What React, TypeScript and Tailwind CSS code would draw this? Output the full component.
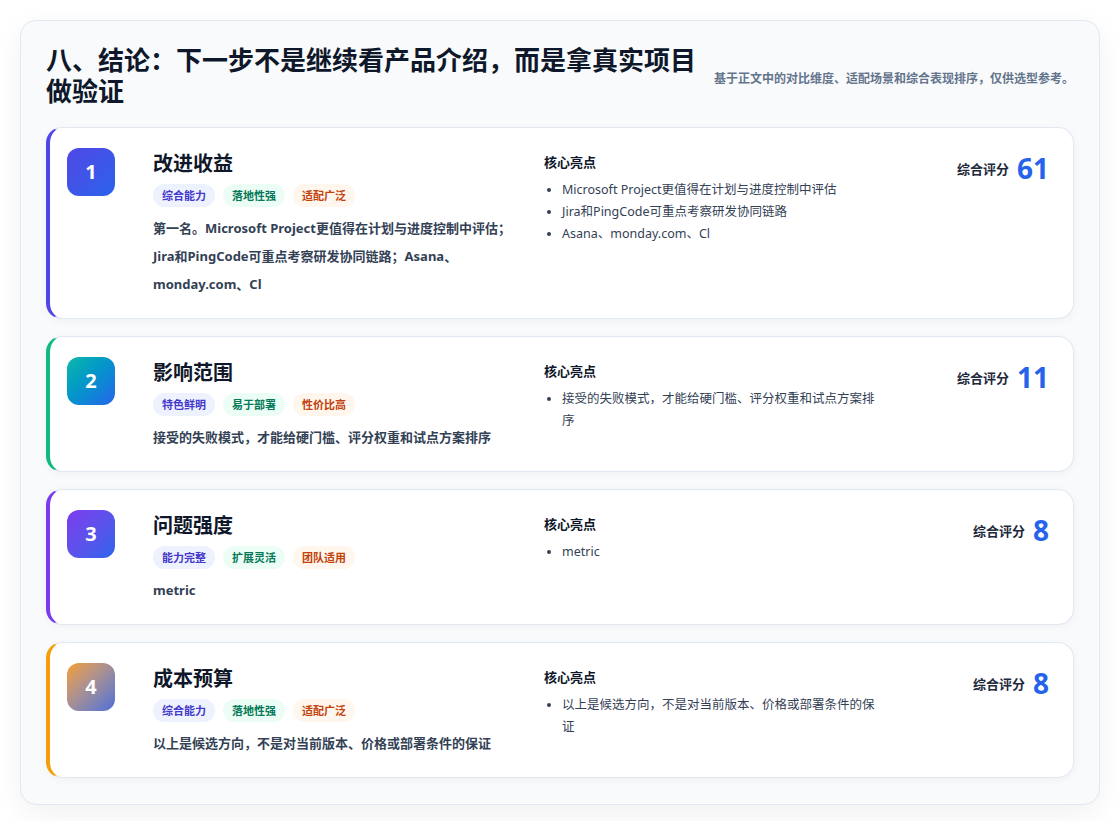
import React from "react";

type Item = {
  n: number;
  title: string;
  tags: string[];
  desc: string;
  points: string[];
  score: number;
  border: string;
  badge: string;
};

const items: Item[] = [
  {
    n: 1,
    title: "改进收益",
    tags: ["综合能力", "落地性强", "适配广泛"],
    desc: "第一名。Microsoft Project更值得在计划与进度控制中评估；Jira和PingCode可重点考察研发协同链路；Asana、monday.com、Cl",
    points: ["Microsoft Project更值得在计划与进度控制中评估", "Jira和PingCode可重点考察研发协同链路", "Asana、monday.com、Cl"],
    score: 61,
    border: "border-l-[#4f46e5]",
    badge: "bg-gradient-to-br from-[#4f46e5] to-[#2563eb]",
  },
  {
    n: 2,
    title: "影响范围",
    tags: ["特色鲜明", "易于部署", "性价比高"],
    desc: "接受的失败模式，才能给硬门槛、评分权重和试点方案排序",
    points: ["接受的失败模式，才能给硬门槛、评分权重和试点方案排序"],
    score: 11,
    border: "border-l-[#10b981]",
    badge: "bg-gradient-to-br from-[#14b8a6] to-[#2563eb]",
  },
  {
    n: 3,
    title: "问题强度",
    tags: ["能力完整", "扩展灵活", "团队适用"],
    desc: "metric",
    points: ["metric"],
    score: 8,
    border: "border-l-[#7c3aed]",
    badge: "bg-gradient-to-br from-[#7c3aed] to-[#2563eb]",
  },
  {
    n: 4,
    title: "成本预算",
    tags: ["综合能力", "落地性强", "适配广泛"],
    desc: "以上是候选方向，不是对当前版本、价格或部署条件的保证",
    points: ["以上是候选方向，不是对当前版本、价格或部署条件的保证"],
    score: 8,
    border: "border-l-[#f59e0b]",
    badge: "bg-gradient-to-br from-[#f59e0b] to-[#4f6bd8]",
  },
];

const tagStyles = [
  "bg-[#eef2ff] text-[#4338ca]",
  "bg-[#ecfdf5] text-[#047857]",
  "bg-[#fff7ed] text-[#c2410c]",
];

export default function App() {
  return (
    <div
      className="min-h-screen bg-white p-5"
      style={{ fontFamily: '"Noto Sans", "Noto Sans CJK SC", sans-serif' }}
    >
      <div className="rounded-2xl border border-[#e2e8f0] bg-[#f8fafc] px-[25px] pt-[24px] pb-[26px] shadow-[0_8px_30px_rgba(15,23,42,0.06)]">
        <div className="mb-[20px] flex items-start justify-between">
          <h1 className="w-[660px] text-[26px] font-bold leading-[31px] text-[#0f172a]">
            八、结论：下一步不是继续看产品介绍，而是拿真实项目做验证
          </h1>
          <p className="mt-[24px] w-[360px] text-right text-[12px] font-bold leading-[20px] text-[#64748b]">
            基于正文中的对比维度、适配场景和综合表现排序，仅供选型参考。
          </p>
        </div>
        <div className="flex flex-col gap-[17px]">
          {items.map((it) => (
            <div
              key={it.n}
              className={`flex rounded-2xl border border-[#e2e8f0] border-l-4 ${it.border} bg-white py-5 pl-[17px] pr-6 shadow-[0_2px_10px_rgba(15,23,42,0.04)]`}
            >
              <div className={`flex h-12 w-12 shrink-0 items-center justify-center rounded-xl text-[20px] font-bold text-white ${it.badge}`}>
                {it.n}
              </div>
              <div className="ml-[38px] w-[370px] shrink-0">
                <div className="text-[20px] font-bold leading-[32px] text-[#0f172a]">{it.title}</div>
                <div className="mt-[4px] flex gap-2">
                  {it.tags.map((t, i) => (
                    <span key={t} className={`rounded-full px-[9px] text-[11px] font-bold leading-[23px] ${tagStyles[i]}`}>
                      {t}
                    </span>
                  ))}
                </div>
                <p className="mt-[7px] text-[13px] font-bold leading-[28px] text-[#334155]">{it.desc}</p>
              </div>
              <div className="ml-[21px] w-[335px] shrink-0 pt-[3px]">
                <div className="text-[13px] font-bold leading-[22px] text-[#0f172a]">核心亮点</div>
                <ul className="mt-[6px] list-disc pl-[18px] text-[12.5px] leading-[22px] text-[#334155]">
                  {it.points.map((p) => (
                    <li key={p}>{p}</li>
                  ))}
                </ul>
              </div>
              <div className="flex flex-1 items-start justify-end gap-2 pt-[2px]">
                <span className="mt-[10px] text-[13px] font-bold text-[#1e293b]">综合评分</span>
                <span className="text-[28px] font-bold leading-[36px] text-[#2563eb]">{it.score}</span>
              </div>
            </div>
          ))}
        </div>
      </div>
    </div>
  );
}
